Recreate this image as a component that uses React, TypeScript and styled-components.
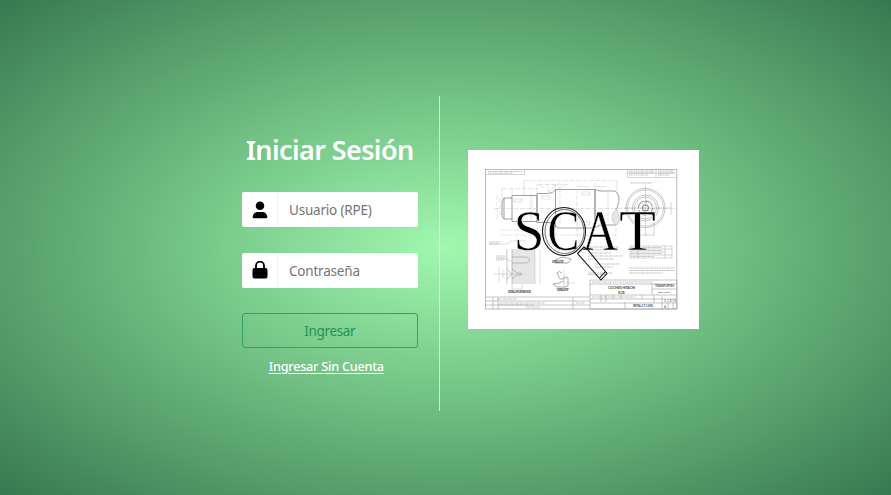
import React from "react";
import styled, { createGlobalStyle } from "styled-components";

const GlobalStyle = createGlobalStyle`
  * { box-sizing: border-box; }
  body { margin: 0; font-family: "Noto Sans", "Open Sans", sans-serif; }
`;

const Page = styled.main`
  display: flex;
  align-items: flex-start;
  width: 100%;
  height: 100vh;
  min-height: 495px;
  padding: 96px 0 0 242px;
  overflow: hidden;
  background: radial-gradient(ellipse at center, #a0f8ae 0%, #37794f 100%);
`;

const LoginPanel = styled.section`
  width: 197.5px;
  height: 315px;
  padding: 36px 21px 0 0;
  border-right: 1px solid rgba(255, 255, 255, 0.65);
`;

const Title = styled.h1`
  height: 36px;
  margin: 0 0 24px;
  color: #fff;
  font-size: 27px;
  font-weight: 600;
  line-height: 36px;
  letter-spacing: -0.6px;
  text-align: center;
  white-space: nowrap;
`;

const Form = styled.form`
  display: flex;
  flex-direction: column;
  gap: 25.4px;
`;

const Field = styled.label`
  display: flex;
  height: 35.2px;
  overflow: hidden;
  border-radius: 2px;
  background: #fff;
`;

const IconSlot = styled.span`
  display: flex;
  flex: 0 0 36px;
  align-items: center;
  justify-content: center;
  border-right: 1px solid #ecf9ee;
`;

const Input = styled.input`
  flex: 1;
  min-width: 0;
  padding: 1px 0 0 11px;
  border: 0;
  outline: 0;
  color: #333;
  background: transparent;
  font: 400 13.5px "Noto Sans", sans-serif;
  letter-spacing: -0.2px;
  &::placeholder { color: #757575; opacity: 1; }
`;

const SubmitButton = styled.button`
  height: 35px;
  padding: 1px 0 0;
  border: 1px solid #32a165;
  border-radius: 3px;
  color: #239158;
  background: transparent;
  font: 400 13.5px "Noto Sans", sans-serif;
  letter-spacing: -0.35px;
`;

const GuestLink = styled.a`
  display: block;
  margin-top: 8.6px;
  padding-right: 7px;
  color: #fff;
  font-size: 12.7px;
  font-weight: 500;
  line-height: 18px;
  letter-spacing: -0.25px;
  text-align: center;
  text-decoration: underline;
  text-underline-offset: 2px;
`;

const LogoCard = styled.figure`
  width: 231px;
  height: 179px;
  margin: 54px 0 0 28.5px;
  background: #fff;
`;

const Drawing = styled.svg`
  display: block;
  width: 231px;
  height: 179px;
`;

const Icon = styled.svg`
  display: block;
  width: 16px;
  height: 18px;
`;

const UserIcon = () => (
  <Icon viewBox="0 0 16 18" aria-hidden="true">
    <circle cx="8" cy="4.8" r="4.3" />
    <path d="M.7 16.1c0-3.2 2.4-5.2 5-5.2h4.6c2.6 0 5 2 5 5.2 0 .7-.4 1.1-1.1 1.1H1.8c-.7 0-1.1-.4-1.1-1.1Z" />
  </Icon>
);

const LockIcon = () => (
  <Icon viewBox="0 0 16 18" aria-hidden="true">
    <path d="M4 8V4.700a4 4 0 0 1 8 0V8" fill="none" stroke="#000" strokeWidth="1.8" />
    <rect x=".5" y="7" width="15" height="10.400" rx="2" />
  </Icon>
);

type NoteProps = { x: number; y: number; w: number; rows: number; step?: number };

// Rows of small specification notes, drawn as broken strokes.
const Notes = ({ x, y, w, rows, step = 3 }: NoteProps) => (
  <g stroke="#999" strokeWidth=".9" strokeDasharray="1.1 .5 1.8 .4 .8 .6" opacity=".7">
    {Array.from({ length: rows }, (_, i) => (
      <path key={i} d={`M${x} ${y + i * step}h${i === rows - 1 ? w * 0.75 : w}`} />
    ))}
  </g>
);

const Logo = () => (
  <Drawing viewBox="468 150 231 179" role="img" aria-label="SCAT">
    <g fill="none" stroke="#aaa" strokeWidth=".5">
      <rect x="485.5" y="169.5" width="191.3" height="139.5" strokeWidth=".8" />
      <path d="M485 174.5h39.500v-5M627.500 169.500v8h49M656 169.500v8M627 173h49" />

      {/* Shaft outline */}
      <path stroke="#808080" strokeWidth=".75" d="M512 198h-8q-2 2-2 4v13q0 3 2 4h8M504 198v21M512 195.500v26M512 195.500h25v26h-25M537 193.500v29M537 193.500h11q5 0 7.500-4h39.500v38.500h-37q-4-5-9-5.500h-12M555.500 189.500v38M595 189.500v38M595 189.500l5 1.500h15c6 5 4 11 2 17s-5 10-1 17h-16l-5 2.500" />
      <path fill="#e7e7e7" d="M616 209c-5 5-5 13 0 16 5-2 4-9 0-16Z" />
      <path stroke="#bbb" strokeDasharray="5 1.500" strokeWidth=".4" d="M494 208.500h183M524 180.500h93M502 188.500h35M538 184.500h30M577 186.500h12M595 186.500h12M497 195v25M500 198v17M530 193v28M560 187v39M577 189v38M608 192v33M501 230h42M501 235h115M537 227v9M555 227v13M616 227v9M577 227v10" />
      <g stroke="#bbb" strokeWidth=".4">
        <path d="M502 188v11M512 188v8M524 180v15M537 184v10M548 184v10M555 184v6M595 182v8M601 186v6M617 180v12M532 194v26M539 185l5 3m11-3-6 7m16-7-9 5m-1-4 5-3" />
        <rect x="514" y="199" width="8" height="3" /><rect x="542" y="196" width="8" height="3" /><rect x="582" y="192" width="8" height="3" /><rect x="582" y="222" width="8" height="3" />
      </g>

      {/* End view */}
      <g stroke="#888">
        <circle cx="645.500" cy="208" r="19.500" /><circle cx="645.500" cy="208" r="18" strokeWidth=".4" />
        <circle cx="645.500" cy="208" r="13" /><circle cx="645.500" cy="208" r="11" />
        <circle cx="645.500" cy="208" r="7" strokeWidth="1" strokeDasharray="9 2" /><circle cx="645.500" cy="208" r="3" strokeWidth="1.100" />
        <circle cx="645.500" cy="202" r="1" /><circle cx="645.500" cy="214" r="1" />
        <path strokeWidth=".35" d="M645.500 186v50M624 208h46M671 202v13M637 222v14M654 222v14M637 235h17" />
      </g>

      {/* Bore detail */}
      <path fill="#e6e6e6" stroke="none" d="M512 249h23v35h-23z" />
      <path stroke="#888" d="M512 249v35M507 249v35M512 257h15l3 3-3 3h-15M507 269l5 5-5 5M512 269l5 4h4v2h-4l-5 4" />
      <path strokeWidth=".4" d="M498 258l14 3M499 266v16M503 269v9M535 249v35M540 250v34M490 244h17l4-3h15M512 284v5h10v-5M494 274h30" />
      <path stroke="#888" strokeWidth=".7" d="M555 260l8-3 8 2-3 4h-13M557 273l3 6h4v-2l4 1v8l-3 1h-8l-4-3 6-1 5-2M557 273q2-3 5 0" />
      <path strokeWidth=".35" d="M563 283h12M555 289h12M564 270v21" />

      {/* Parts table */}
      <path d="M630 246h42v12h-42zM630 249h42M630 252h35M630 255h42M665 246v12M638 249v9" />

      {/* Revision and title blocks */}
      <path stroke="#999" strokeWidth=".55" d="M486 297h104M486 301h104M486 305h104M493 297v12M498 297v12M573 297v12M590 280h87v29h-87zM590 284h87M590 295h87M590 299h87M590 303h87M601 295v7M606 295v7M613 295v4M621 295v4M642 295v4M654 295v8M652 283v12M652 289h25M625 302v7M662 296v13M668 299v10M673 299v10" />
    </g>

    <Notes x={488} y={171.5} w={34} rows={2} step={1.7} />
    <Notes x={629} y={171} w={25} rows={3} step={2} /><Notes x={658} y={171} w={16} rows={3} step={2} />
    <Notes x={631} y={183} w={28} rows={1} />
    <Notes x={588} y={247} w={31} rows={3} /><Notes x={588} y={256} w={35} rows={2} />
    <Notes x={595} y={264} w={24} rows={2} /><Notes x={588} y={273} w={24} rows={2} step={1.500} />
    <Notes x={629} y={268} w={45} rows={3} step={2.500} />
    <Notes x={631} y={247.500} w={31} rows={4} /><Notes x={497} y={299} w={26} rows={1} />
    <Notes x={499} y={303} w={46} rows={2} step={2} /><Notes x={526} y={307} w={18} rows={1} />
    <Notes x={489} y={242} w={12} rows={2} step={2} /><Notes x={496} y={256} w={10} rows={3} step={2} />
    <Notes x={592} y={297} w={58} rows={1} /><Notes x={576} y={303} w={12} rows={1} /><Notes x={592} y={282} w={80} rows={1} />
    <g fill="#555" fontFamily="Liberation Sans" fontWeight="700" textAnchor="middle" fontSize="2.700">
      <text x="621.500" y="289.200" fontSize="3.500" textLength="27">COCHES HITACHI</text><text x="621.500" y="293.500" fontSize="3.500">EJE</text>
      <text x="519.500" y="292.500" textLength="23">DETALLE PUNTA DE EJE</text><text x="558" y="263.200" textLength="12">DETALLE &quot;A&quot;</text>
      <text x="563" y="291" textLength="12">DETALLE &quot;B&quot;</text><text x="643" y="306.500" textLength="20">METAL 2-T-1-0805</text>
      <text x="664.500" y="287" textLength="19">TRANSPORTES</text><text x="664" y="293" fontSize="2.100">MECÁNICO</text>
      <text x="665" y="302">1</text><text x="670.500" y="302">2</text><text x="675" y="302">3</text><text x="665" y="308">4</text>
    </g>

    {/* Wordmark and magnifying glass */}
    <g fill="#000" stroke="#fff" strokeWidth=".45" fontFamily="Liberation Serif, serif" fontSize="56">
      <text x="513.500" y="250" textLength="31" lengthAdjust="spacingAndGlyphs">S</text>
      <text x="547.500" y="250" textLength="32" lengthAdjust="spacingAndGlyphs">C</text>
      <text x="582" y="250" textLength="36" lengthAdjust="spacingAndGlyphs">A</text>
      <text x="619" y="250" textLength="37" lengthAdjust="spacingAndGlyphs">T</text>
    </g>
    <g fill="none" stroke="#111">
      <ellipse cx="564" cy="231.500" rx="21.500" ry="24" strokeWidth="1.050" />
      <ellipse cx="564.500" cy="231.500" rx="19.500" ry="22" strokeWidth=".6" />
      <path strokeWidth="1.100" strokeLinejoin="round" d="M577.500 253.500l6.500-6.500 4 3 19 23.500-6 6.500zM577.500 253.500l6-6M599.500 278l6-6.500" />
    </g>
  </Drawing>
);

export default function App() {
  return (
    <>
      <GlobalStyle />
      <Page>
        <LoginPanel>
          <Title>Iniciar Sesión</Title>
          <Form onSubmit={(event) => event.preventDefault()}>
            <Field>
              <IconSlot><UserIcon /></IconSlot>
              <Input type="text" placeholder="Usuario (RPE)" />
            </Field>
            <Field>
              <IconSlot><LockIcon /></IconSlot>
              <Input type="password" placeholder="Contraseña" />
            </Field>
            <SubmitButton type="submit">Ingresar</SubmitButton>
          </Form>
          <GuestLink href="#">Ingresar Sin Cuenta</GuestLink>
        </LoginPanel>
        <LogoCard><Logo /></LogoCard>
      </Page>
    </>
  );
}
